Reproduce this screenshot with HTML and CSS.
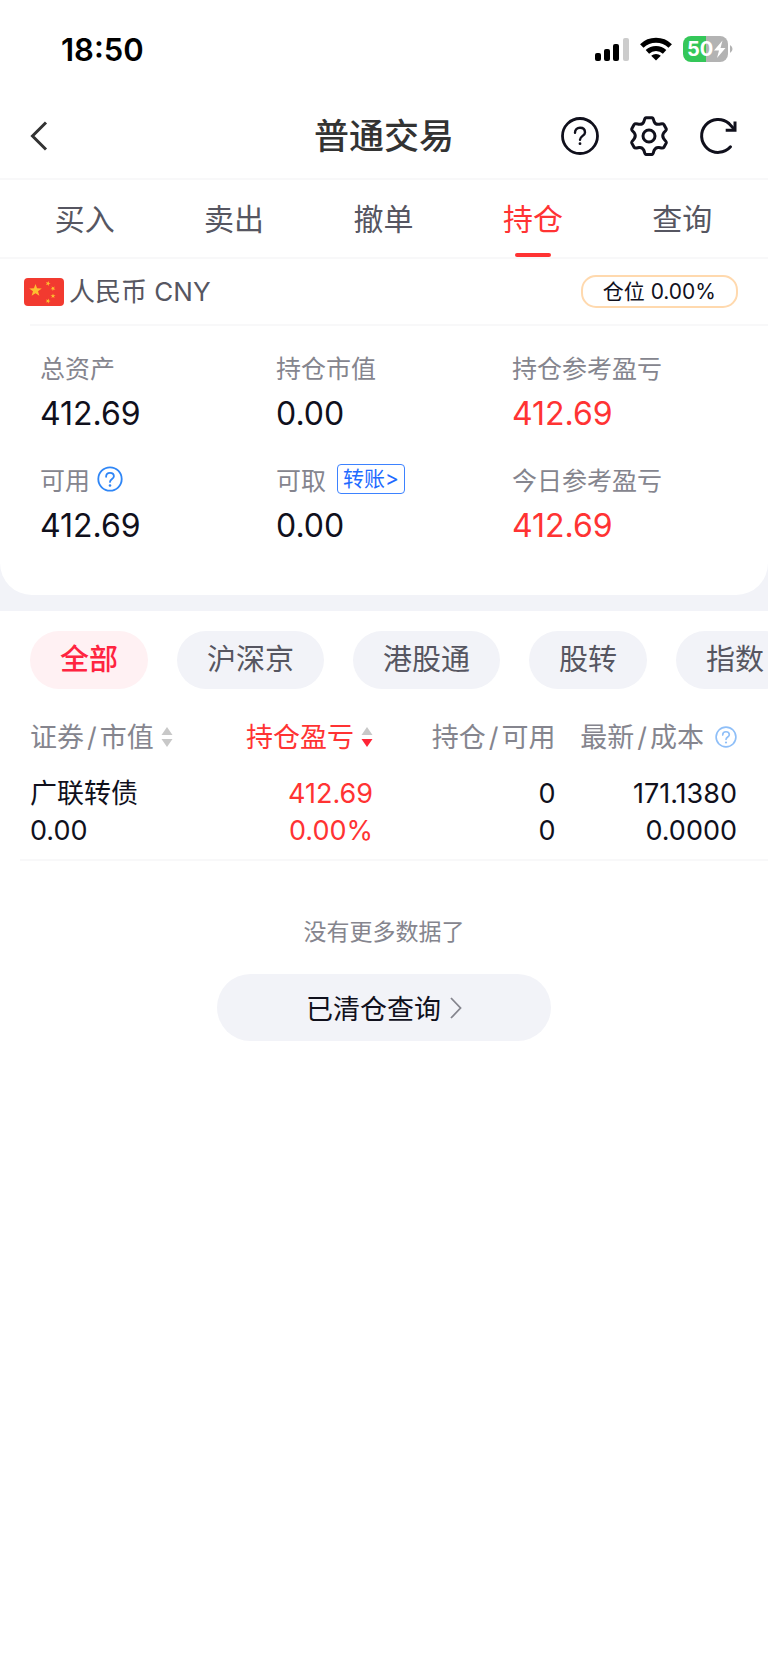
FILE: index.html
```html
<!DOCTYPE html>
<html lang="zh-CN">
<head>
<meta charset="utf-8">
<meta name="viewport" content="width=device-width, initial-scale=1">
<title>普通交易</title>
<link rel="stylesheet" href="styles.css">
</head>
<body>
<div class="status">
  <span class="clock">18:50</span>
  <div class="status-icons">
    <svg class="signal" viewBox="0 0 34 23" aria-hidden="true">
      <rect x="0" y="15" width="6" height="8" rx="2"/>
      <rect x="9" y="11" width="6" height="12" rx="2"/>
      <rect x="18" y="6" width="6" height="17" rx="2"/>
      <rect x="28" y="0" width="6" height="23" rx="2" fill="#ccc"/>
    </svg>
    <svg class="wifi" viewBox="0 0 32 24" aria-hidden="true">
      <g fill="none" stroke="#000" stroke-width="5">
        <path d="M1.800 9a20.500 20.500 0 0 1 28.400 0"/>
        <path d="M7.400 14.800a12.600 12.600 0 0 1 17.200 0"/>
      </g>
      <path d="M16 23.600l-4.800-4.800a7 7 0 0 1 9.600 0z"/>
    </svg>
    <svg class="battery" viewBox="0 0 50 26" aria-hidden="true">
      <path d="M23 0h14a8 8 0 0 1 8 8v10a8 8 0 0 1-8 8H23z" fill="#b3b3b3"/>
      <path d="M23 0H8a8 8 0 0 0-8 8v10a8 8 0 0 0 8 8h15z" fill="#34c759"/>
      <path d="M47 9q2.500 1.500 2.500 4t-2.500 4z" fill="#b3b3b3"/>
      <text class="battery-text" x="4" y="20">50</text>
      <path d="M39.500 4.500L31 14.500h5l-2 7.500 8.500-10h-5z" fill="#fff"/>
    </svg>
  </div>
</div>

<header class="header">
  <button class="icon-btn back" aria-label="返回">
    <svg viewBox="0 0 18 30" width="18" height="30"><path d="M16 1.500L2.500 15 16 28.500" fill="none" stroke="#333" stroke-width="3"/></svg>
  </button>
  <h1 class="title">普通交易</h1>
  <div class="actions">
    <button class="icon-btn" aria-label="帮助">
      <svg viewBox="0 0 40 40" width="40" height="40" fill="none" stroke="#10101c" stroke-width="2.800" stroke-linecap="round"><circle cx="20" cy="20" r="17.500"/><path stroke-width="2.400" d="M15 16.800c0-3 2-5 5-5s5 1.800 5 4.600c0 3.400-5 3.600-5 7.400"/><circle cx="20" cy="27.700" r="1.400" fill="#10101c" stroke="none"/></svg>
    </button>
    <button class="icon-btn" aria-label="设置">
      <svg viewBox="0 0 40 40" width="40" height="40" fill="none" stroke="#10101c" stroke-width="3" stroke-linejoin="round"><circle cx="20" cy="20" r="6"/><path d="M17 1.800h6c1.500 0 1.300 2.300 2.300 4.200s2.500 2.600 4.600 2.300 4-1.200 5 .2l2.300 4.200c.8 1.400-1.700 3-2.600 4.300s-.9 4 0 5.600 3.400 2.900 2.600 4.500l-2.300 4.200c-1 1.400-3 .5-5 .2s-3.600.6-4.600 2.500-.8 4.400-2.300 4.400h-6c-1.500 0-1.300-2.500-2.300-4.400s-2.600-2.800-4.600-2.500-4 1.200-5-.2l-2.300-4.200c-.8-1.600 1.700-2.900 2.600-4.500s.9-4.300 0-5.600-3.400-2.900-2.600-4.300l2.300-4.200c1-1.400 3-.5 5-.2s3.600-.4 4.600-2.300.8-4.200 2.300-4.200z"/></svg>
    </button>
    <button class="icon-btn" aria-label="刷新">
      <svg viewBox="0 0 40 40" width="40" height="40" fill="none" stroke="#10101c" stroke-width="3"><path stroke-linecap="round" d="M32.500 30.800A16.500 16.500 0 1 1 31 7.500l5 5.500"/><path d="M37 5.500v8.800h-9.300"/></svg>
    </button>
  </div>
</header>

<nav class="tabs">
  <a class="tab" href="#buy">买入</a>
  <a class="tab" href="#sell">卖出</a>
  <a class="tab" href="#cancel">撤单</a>
  <a class="tab active" href="#hold" aria-current="page">持仓</a>
  <a class="tab" href="#query">查询</a>
</nav>

<main>
  <div class="summary-wrap">
    <section class="summary">
      <div class="currency">
        <svg class="flag" viewBox="0 0 40 28" width="40" height="28" aria-hidden="true">
          <defs><path id="star" d="M0-10L2.350-3.240 9.510-3.090 3.800 1.240 5.880 8.090 0 4-5.880 8.090-3.800 1.240-9.510-3.090-2.350-3.240z"/></defs>
          <rect width="40" height="28" rx="4" fill="#f23a30"/>
          <g fill="#fdbf30">
            <use href="#star" transform="translate(11.500 12.500) scale(.66)"/>
            <use href="#star" transform="translate(24 5.500) rotate(20) scale(.26)"/>
            <use href="#star" transform="translate(29 10.500) rotate(40) scale(.26)"/>
            <use href="#star" transform="translate(29 18) scale(.26)"/>
            <use href="#star" transform="translate(24 23) rotate(20) scale(.26)"/>
          </g>
        </svg>
        <span class="currency-name">人民币 CNY</span>
        <button class="position">仓位 0.00%</button>
      </div>
      <dl class="metrics">
        <div class="metric"><dt>总资产</dt><dd>412.69</dd></div>
        <div class="metric"><dt>持仓市值</dt><dd>0.00</dd></div>
        <div class="metric"><dt>持仓参考盈亏</dt><dd class="up">412.69</dd></div>
        <div class="metric"><dt>可用
          <button class="icon-btn" aria-label="可用说明"><svg viewBox="0 0 40 40" width="26" height="26" fill="none" stroke="#2f86f6" stroke-width="2.800" stroke-linecap="round"><circle cx="20" cy="20" r="18"/><path d="M14 16.500c0-3.500 2.400-6 6-6s6 2.200 6 5.400c0 4-6 4.200-6 8.600"/><circle cx="20" cy="30" r="2" fill="#2f86f6" stroke="none"/></svg></button></dt><dd>412.69</dd></div>
        <div class="metric"><dt>可取 <a class="transfer" href="#transfer">转账&gt;</a></dt><dd>0.00</dd></div>
        <div class="metric"><dt>今日参考盈亏</dt><dd class="up">412.69</dd></div>
      </dl>
    </section>
  </div>

  <div class="chips">
    <button class="chip selected">全部</button>
    <button class="chip">沪深京</button>
    <button class="chip">港股通</button>
    <button class="chip">股转</button>
    <button class="chip">指数</button>
  </div>

  <div class="holdings">
    <table>
      <thead>
        <tr>
          <th scope="col"><button class="sort">证券<span class="slash">/</span>市值<svg class="arrows" viewBox="0 0 12 20" width="12" height="20"><path d="M6 0l5.500 8H.5zM6 20l5.500-8H.5z" fill="#c8c8c8"/></svg></button></th>
          <th scope="col"><button class="sort up">持仓盈亏<svg class="arrows" viewBox="0 0 12 20" width="12" height="20"><path d="M6 0l5.500 8H.5z" fill="#c8c8c8"/><path d="M6 20l5.500-8H.5z" fill="#ff2436"/></svg></button></th>
          <th scope="col">持仓<span class="slash">/</span>可用</th>
          <th scope="col"><span class="cost">最新<span class="slash">/</span>成本<button class="icon-btn" aria-label="成本说明"><svg viewBox="0 0 40 40" width="22" height="22" fill="none" stroke="#8fbff8" stroke-width="3" stroke-linecap="round"><circle cx="20" cy="20" r="18"/><path d="M14 16.500c0-3.500 2.400-6 6-6s6 2.200 6 5.400c0 4-6 4.200-6 8.600"/><circle cx="20" cy="30" r="2" fill="#8fbff8" stroke="none"/></svg></button></span></th>
        </tr>
      </thead>
      <tbody>
        <tr>
          <td><div>广联转债</div><div>0.00</div></td>
          <td class="up"><div>412.69</div><div>0.00%</div></td>
          <td><div>0</div><div>0</div></td>
          <td><div>171.1380</div><div>0.0000</div></td>
        </tr>
      </tbody>
    </table>
  </div>

  <p class="end">没有更多数据了</p>
  <a class="cleared" href="#cleared">已清仓查询<svg viewBox="0 0 12 22" width="12" height="22" aria-hidden="true"><path d="M1 1l9.500 10L1 21" fill="none" stroke="#85858e" stroke-width="1.800"/></svg></a>
</main>
</body>
</html>
```
FILE: styles.css
```css
* {
  box-sizing: border-box;
}

body {
  margin: 0;
  background: #fff;
  color: #10101c;
  font-family: Inter, "Noto Sans CJK SC", sans-serif;
  overflow-x: hidden;
}

button {
  margin: 0;
  padding: 0;
  border: 0;
  background: none;
  color: inherit;
  font: inherit;
}

a {
  color: inherit;
  text-decoration: none;
}

svg {
  display: block;
}

.up {
  color: #ff3333;
}

/* Status bar */
.status {
  display: flex;
  align-items: center;
  justify-content: space-between;
  height: 94px;
  padding: 4px 35px 0 61px;
}

.clock {
  color: #000;
  font-size: 31px;
  font-weight: 600;
}

.status-icons {
  display: flex;
  align-items: center;
  gap: 11px;
}

.signal {
  width: 34px;
  height: 23px;
}

.wifi {
  width: 32px;
  height: 24px;
}

.battery {
  width: 50px;
  height: 26px;
}

.battery-text {
  fill: #fff;
  font-size: 20px;
  font-weight: 700;
}

/* Title bar */
.header {
  display: grid;
  grid-template-columns: 1fr auto 1fr;
  align-items: center;
  height: 86px;
  padding: 0 30px;
  border-bottom: 2px solid #f8f8f9;
}

.icon-btn {
  display: inline-flex;
}

.back {
  justify-self: start;
}

.title {
  margin: 0;
  color: #333;
  font-size: 35px;
  font-weight: 500;
  line-height: 48px;
}

.actions {
  display: flex;
  justify-content: flex-end;
  gap: 29px;
}

/* Tabs */
.tabs {
  display: flex;
  height: 79px;
  padding: 0 11px 0 10px;
  border-bottom: 2px solid #f8f8f9;
}

.tab {
  display: flex;
  flex: 1;
  flex-direction: column;
  align-items: center;
  justify-content: space-between;
  padding-top: 17px;
  color: #565661;
  font-size: 30px;
  line-height: 44px;
}

.tab.active {
  color: #ff3333;
}

.tab.active::after {
  width: 36px;
  height: 4px;
  border-radius: 2px;
  background: #ff3333;
  content: "";
}

/* Account summary */
.summary-wrap {
  padding-bottom: 16px;
  background: #f2f3f8;
}

.summary {
  padding-bottom: 46px;
  border-radius: 0 0 32px 32px;
  background: #fff;
}

.currency {
  display: flex;
  align-items: center;
  height: 65px;
  padding: 0 30px 0 24px;
}

.currency-name {
  flex: 1;
  margin-left: 5px;
  color: #565661;
  font-size: 26px;
  line-height: 36px;
}

.position {
  padding: 0 20px;
  border: 2px solid #ffd9ae;
  border-radius: 15px;
  font-size: 21px;
  line-height: 29px;
}

.metrics {
  display: grid;
  grid-template-columns: repeat(3, 1fr);
  row-gap: 24px;
  margin: 0 0 0 30px;
  padding: 23px 20px 0 10px;
  border-top: 2px solid #f8f8f9;
}

.metric dt {
  display: flex;
  align-items: center;
  gap: 7px;
  height: 36px;
  color: #85858e;
  font-size: 25px;
  white-space: nowrap;
}

.metric dd {
  margin: 6px 0 0;
  font-size: 32px;
  line-height: 46px;
}

.transfer {
  margin-left: 4px;
  padding: 0 5px;
  border: 1px solid #3d82ff;
  border-radius: 4px;
  color: #1f6bff;
  font-size: 21px;
  line-height: 28px;
}

/* Market filter */
.chips {
  display: flex;
  gap: 29px;
  padding: 20px 0 20px 30px;
  overflow: hidden;
}

.chip {
  flex: none;
  padding: 0 30px;
  border-radius: 29px;
  background: #f2f3f8;
  color: #565661;
  font-size: 29px;
  line-height: 58px;
}

.chip.selected {
  background: #fff1f3;
  color: #ff2440;
  font-weight: 500;
}

/* Holdings */
.holdings {
  margin-left: 20px;
  border-bottom: 2px solid #f8f8f9;
}

.holdings table {
  width: 100%;
  border-collapse: collapse;
  table-layout: fixed;
  font-size: 27px;
  text-align: right;
  white-space: nowrap;
}

.holdings th,
.holdings td {
  padding: 0;
  font-weight: 400;
  line-height: 37px;
}

.holdings th {
  height: 56px;
  color: #85858e;
}

.holdings th:nth-child(1),
.holdings th:nth-child(2) {
  width: 23.6%;
}

.holdings th:nth-child(3) {
  width: 24.4%;
}

.holdings tr > :first-child {
  padding-left: 10px;
  text-align: left;
}

.holdings tr > :last-child {
  padding-right: 31px;
}

.holdings td {
  padding: 10px 0;
}

.slash {
  padding: 0 3px;
}

.sort,
.cost {
  display: inline-flex;
  align-items: center;
}

.sort.up {
  color: #ff3333;
}

.arrows {
  margin-left: 7px;
}

.cost .icon-btn {
  margin-left: 11px;
}

.end {
  margin: 53px 0 0;
  color: #85858e;
  font-size: 23px;
  line-height: 36px;
  text-align: center;
}

.cleared {
  display: flex;
  align-items: center;
  justify-content: center;
  gap: 9px;
  width: 334px;
  height: 67px;
  margin: 24px auto 0;
  border-radius: 34px;
  background: #f2f3f8;
  font-size: 27px;
}
```
